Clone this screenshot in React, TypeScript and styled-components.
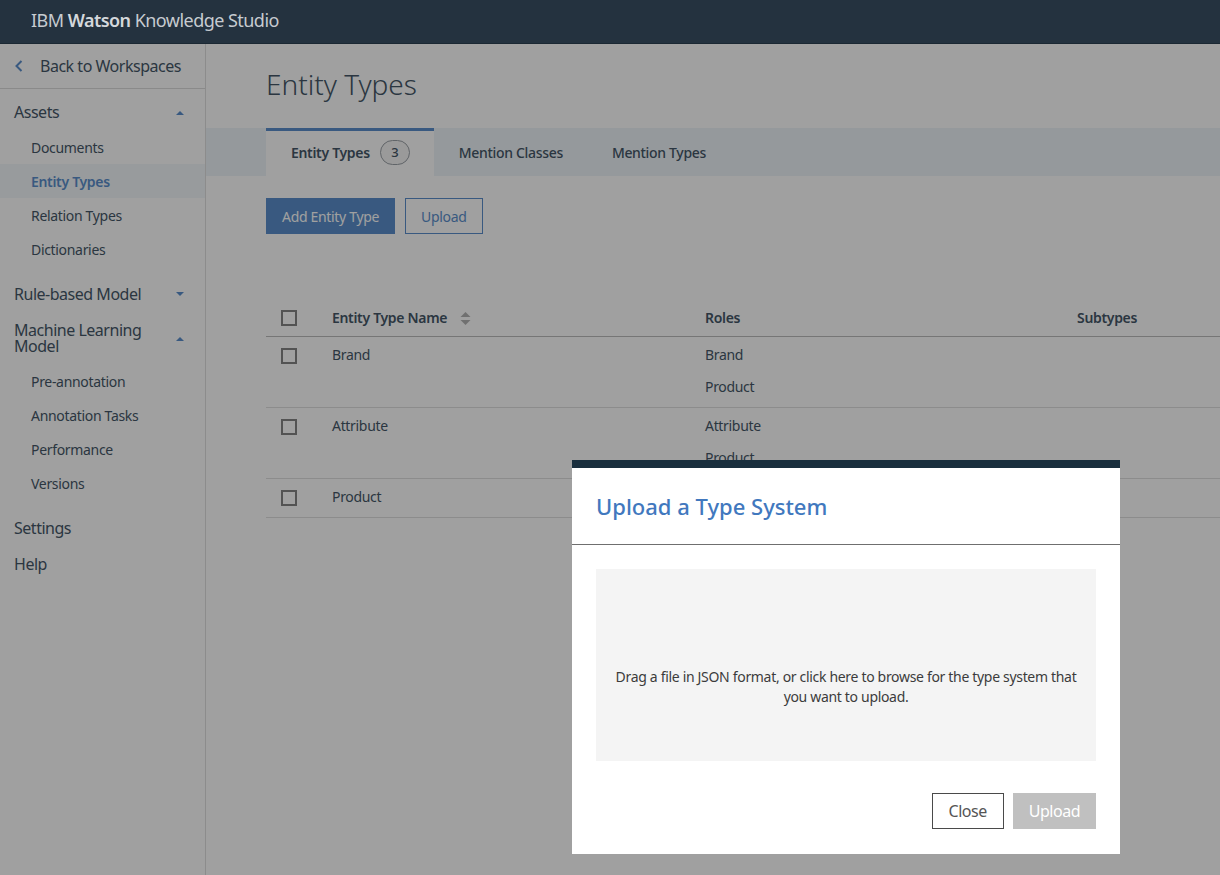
import React from "react";
import styled, { createGlobalStyle } from "styled-components";

const FONT = `"Noto Sans", "Open Sans", Arial, sans-serif`;
const BLUE = "#5b8fcc";
const TEXT = "#455768";

const GlobalStyle = createGlobalStyle`
  html, body { margin: 0; padding: 0; }
  body {
    font-family: ${FONT};
    background: #ffffff;
    color: ${TEXT};
    width: 1220px;
    height: 875px;
    overflow: hidden;
    letter-spacing: -0.02em;
  }
  * { box-sizing: border-box; }
  button { letter-spacing: inherit; }
`;

const Page = styled.div`
  width: 1220px;
  height: 875px;
  display: flex;
  flex-direction: column;
`;

const TopBar = styled.header`
  position: relative;
  z-index: 20;
  height: 44px;
  flex: 0 0 44px;
  background: #24323f;
  border-bottom: 1px solid #1b2833;
  display: flex;
  align-items: center;
  padding: 0 0 4px 31px;
`;

const Brand = styled.div`
  font-size: 18px;
  letter-spacing: -0.03em;
  color: #c6cbd0;
  b { font-weight: 600; color: #d4d8dc; }
`;

const Body = styled.div`
  flex: 1;
  display: flex;
  min-height: 0;
`;

const Sidebar = styled.nav`
  width: 206px;
  flex: 0 0 206px;
  border-right: 1px solid #dfdfdf;
  background: #fff;
  display: flex;
  flex-direction: column;
`;

const BackLink = styled.div`
  height: 45px;
  border-bottom: 1px solid #dcdcdc;
  display: flex;
  align-items: center;
  gap: 17px;
  padding-left: 15px;
  font-size: 16px;
  letter-spacing: -0.03em;
  color: ${TEXT};
`;

const NavList = styled.div`
  padding-top: 5px;
  display: flex;
  flex-direction: column;
`;

const GroupHeader = styled.div`
  display: flex;
  align-items: center;
  justify-content: space-between;
  padding: 10px 21px 10px 14px;
  font-size: 16px;
  line-height: 16px;
  letter-spacing: -0.03em;
  color: ${TEXT};
  span { max-width: 150px; }
`;

const SubList = styled.div`
  display: flex;
  flex-direction: column;
  margin-bottom: 10px;
`;

const SubItem = styled.div<{ $active?: boolean }>`
  height: 34px;
  display: flex;
  align-items: center;
  padding-left: 31px;
  font-size: 14px;
  color: ${(p) => (p.$active ? BLUE : TEXT)};
  font-weight: ${(p) => (p.$active ? 600 : 400)};
  background: ${(p) => (p.$active ? "#f3f7fb" : "transparent")};
`;

const Main = styled.main`
  flex: 1;
  min-width: 0;
  display: flex;
  flex-direction: column;
`;

const PageTitle = styled.h1`
  margin: 0;
  padding: 22px 0 26px 60px;
  font-size: 28px;
  line-height: 36px;
  font-weight: 300;
  letter-spacing: 0;
  color: ${TEXT};
`;

const TabBar = styled.div`
  height: 48px;
  background: #eef4f9;
  display: flex;
  padding-left: 60px;
`;

const Tab = styled.div<{ $active?: boolean }>`
  display: flex;
  align-items: center;
  gap: 10px;
  padding: 0 24px 0 25px;
  font-size: 14px;
  font-weight: ${(p) => (p.$active ? 600 : 500)};
  color: ${TEXT};
  background: ${(p) => (p.$active ? "#fff" : "transparent")};
  border-top: 3px solid ${(p) => (p.$active ? BLUE : "transparent")};
  padding-bottom: 3px;
`;

const Badge = styled.span`
  width: 30px;
  height: 25px;
  border-radius: 13px;
  border: 1px solid #9aa0a6;
  background: #f5f5f5;
  display: flex;
  align-items: center;
  justify-content: center;
  font-size: 13px;
  font-weight: 500;
  color: ${TEXT};
`;

const Toolbar = styled.div`
  display: flex;
  gap: 10px;
  padding: 22px 0 0 60px;
`;

const Button = styled.button<{ $variant: "primary" | "secondary" }>`
  height: 36px;
  padding: 0 15px;
  font-family: ${FONT};
  font-size: 14px;
  border: 1px solid ${BLUE};
  background: ${(p) => (p.$variant === "primary" ? BLUE : "#fff")};
  color: ${(p) => (p.$variant === "primary" ? "#fff" : BLUE)};
`;

const Table = styled.div`
  margin: 66px 0 0 60px;
  display: flex;
  flex-direction: column;
`;

const Row = styled.div<{ $head?: boolean }>`
  display: grid;
  grid-template-columns: 66px 373px 372px 1fr;
  border-bottom: 1px solid ${(p) => (p.$head ? "#bdbdbd" : "#dfdfdf")};
  font-size: 14px;
  font-weight: ${(p) => (p.$head ? 600 : 400)};
  color: ${TEXT};
`;

const Cell = styled.div<{ $head?: boolean }>`
  padding: ${(p) => (p.$head ? "8px 0" : "8px 0 10px")};
  line-height: 20px;
  display: flex;
  flex-direction: column;
  gap: 12px;
`;

const HeadLabel = styled.div`
  display: flex;
  align-items: center;
  gap: 13px;
`;

const CheckCell = styled.div<{ $head?: boolean }>`
  padding: ${(p) => (p.$head ? "10px 0 0 15px" : "11px 0 0 15px")};
`;

const Checkbox = styled.span`
  display: block;
  width: 16px;
  height: 16px;
  border: 2px solid #858585;
  background: #fff;
`;

const Backdrop = styled.div`
  position: fixed;
  inset: 0;
  z-index: 10;
  background: rgba(0, 0, 0, 0.373);
`;

const Modal = styled.div`
  position: absolute;
  left: 572px;
  top: 460px;
  width: 548px;
  height: 394px;
  background: #fff;
  border-top: 8px solid #1a2f3e;
  display: flex;
  flex-direction: column;
`;

const ModalHeader = styled.div`
  padding: 24px 24px 24px;
  border-bottom: 1px solid #6f6f6f;
`;

const ModalTitle = styled.h2`
  margin: 0;
  font-size: 22px;
  line-height: 28px;
  font-weight: 500;
  letter-spacing: 0;
  color: #4178be;
`;

const ModalBody = styled.div`
  padding: 24px 24px 0;
`;

const DropZone = styled.div`
  height: 192px;
  background: #f4f4f4;
  padding: 98px 14px 0;
  text-align: center;
  font-size: 14px;
  line-height: 20px;
  color: #3c3c3c;
`;

const ModalFooter = styled.div`
  display: flex;
  justify-content: flex-end;
  gap: 9px;
  padding: 32px 24px 24px;
`;

const ModalButton = styled.button<{ $disabled?: boolean }>`
  height: 36px;
  padding: 0 ${(p) => (p.$disabled ? "15px" : "16px")};
  font-family: ${FONT};
  font-size: 16px;
  letter-spacing: -0.03em;
  border: 1px solid ${(p) => (p.$disabled ? "#c0c0c0" : "#4a4a4a")};
  background: ${(p) => (p.$disabled ? "#c0c0c0" : "#fff")};
  color: ${(p) => (p.$disabled ? "#fff" : "#555")};
`;

const ChevronLeft = () => (
  <svg width="8" height="12" viewBox="0 0 8 12">
    <polyline points="6.5,1 1.5,6 6.5,11" fill="none" stroke={BLUE} strokeWidth="2" />
  </svg>
);

const Caret = ({ up }: { up?: boolean }) => (
  <svg width="8" height="5" viewBox="0 0 8 5">
    {up ? <polygon points="0,5 4,1 8,5" fill={BLUE} /> : <polygon points="0,0 4,4 8,0" fill={BLUE} />}
  </svg>
);

const SortIcon = () => (
  <svg width="11" height="15" viewBox="0 0 11 15">
    <polygon points="0.5,6 5.5,1 10.5,6" fill="#b3b3b3" />
    <polygon points="0.5,9 5.5,14 10.5,9" fill="#b3b3b3" />
  </svg>
);

const rows = [
  { name: "Brand", roles: ["Brand", "Product"] },
  { name: "Attribute", roles: ["Attribute", "Product"] },
  { name: "Product", roles: [] as string[] },
];

export default function App() {
  return (
    <>
      <GlobalStyle />
      <Page>
        <TopBar>
          <Brand>
            IBM <b>Watson</b> Knowledge Studio
          </Brand>
        </TopBar>
        <Body>
          <Sidebar>
            <BackLink>
              <ChevronLeft />
              Back to Workspaces
            </BackLink>
            <NavList>
              <GroupHeader>
                <span>Assets</span>
                <Caret up />
              </GroupHeader>
              <SubList>
                <SubItem>Documents</SubItem>
                <SubItem $active>Entity Types</SubItem>
                <SubItem>Relation Types</SubItem>
                <SubItem>Dictionaries</SubItem>
              </SubList>
              <GroupHeader>
                <span>Rule-based Model</span>
                <Caret />
              </GroupHeader>
              <GroupHeader>
                <span>Machine Learning Model</span>
                <Caret up />
              </GroupHeader>
              <SubList>
                <SubItem>Pre-annotation</SubItem>
                <SubItem>Annotation Tasks</SubItem>
                <SubItem>Performance</SubItem>
                <SubItem>Versions</SubItem>
              </SubList>
              <GroupHeader>
                <span>Settings</span>
              </GroupHeader>
              <GroupHeader>
                <span>Help</span>
              </GroupHeader>
            </NavList>
          </Sidebar>
          <Main>
            <PageTitle>Entity Types</PageTitle>
            <TabBar>
              <Tab $active>
                Entity Types <Badge>3</Badge>
              </Tab>
              <Tab>Mention Classes</Tab>
              <Tab>Mention Types</Tab>
            </TabBar>
            <Toolbar>
              <Button $variant="primary">Add Entity Type</Button>
              <Button $variant="secondary">Upload</Button>
            </Toolbar>
            <Table>
              <Row $head>
                <CheckCell $head>
                  <Checkbox />
                </CheckCell>
                <Cell $head>
                  <HeadLabel>
                    Entity Type Name <SortIcon />
                  </HeadLabel>
                </Cell>
                <Cell $head>Roles</Cell>
                <Cell $head>Subtypes</Cell>
              </Row>
              {rows.map((r) => (
                <Row key={r.name}>
                  <CheckCell>
                    <Checkbox />
                  </CheckCell>
                  <Cell>{r.name}</Cell>
                  <Cell>
                    {r.roles.map((role) => (
                      <div key={role}>{role}</div>
                    ))}
                  </Cell>
                  <Cell />
                </Row>
              ))}
            </Table>
          </Main>
        </Body>
      </Page>
      <Backdrop>
        <Modal>
          <ModalHeader>
            <ModalTitle>Upload a Type System</ModalTitle>
          </ModalHeader>
          <ModalBody>
            <DropZone>
              Drag a file in JSON format, or click here to browse for the type system that you want to upload.
            </DropZone>
          </ModalBody>
          <ModalFooter>
            <ModalButton>Close</ModalButton>
            <ModalButton $disabled>Upload</ModalButton>
          </ModalFooter>
        </Modal>
      </Backdrop>
    </>
  );
}
